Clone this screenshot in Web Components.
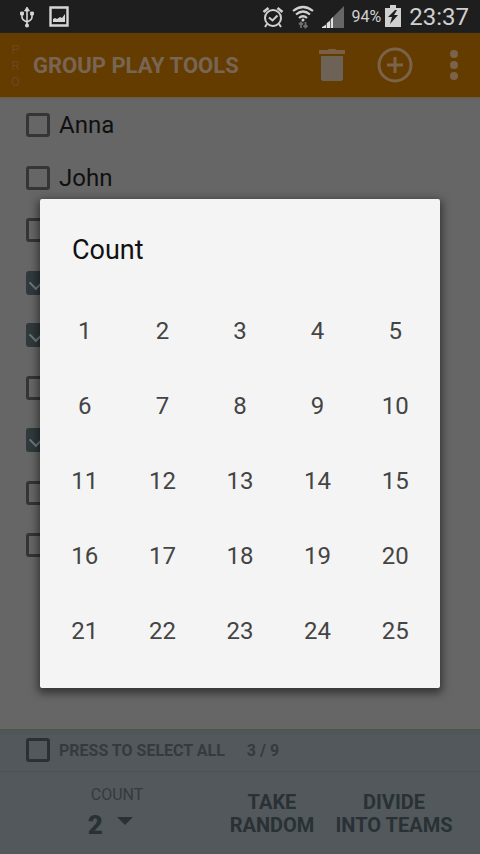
<!DOCTYPE html>
<html lang="en">
<head>
<meta charset="utf-8">
<meta name="viewport" content="width=device-width, initial-scale=1">
<title>Group Play Tools</title>
<style>
html, body { margin: 0; height: 100%; }
body { font-family: Roboto, "Liberation Sans", sans-serif; background: #666; }
</style>
</head>
<body>
<play-app></play-app>
<script>
const define = (name, html, setup) => customElements.define(name, class extends HTMLElement {
  constructor() {
    super();
    this.attachShadow({ mode: "open" });
  }
  connectedCallback() {
    this.shadowRoot.innerHTML = `<style>*{box-sizing:border-box}button{font:inherit;color:inherit;background:none;border:0;padding:0;margin:0;cursor:pointer}svg{display:block}</style>` + html;
    if (setup) setup.call(this, this.shadowRoot);
  }
});

define("status-bar", `
<style>
:host { display: flex; align-items: center; height: 33px; padding: 0 11px 0 17px; background: #1e1e1e; color: #d0d0d0; font-size: 16px; }
.left { display: flex; gap: 12px; flex: 1; align-items: center; }
.right { display: flex; gap: 8px; align-items: center; }
.power { display: flex; gap: 4px; align-items: center; }
time { font-size: 24px; line-height: 32px; }
</style>
<div class="left">
  <svg width="20" height="24" viewBox="0 0 20 24" fill="none" stroke="#d6d6d6" stroke-width="1.6"><path d="M10 4v17M5 9v3q0 3 5 5q5-2 5-5V9"/><path d="M10 2l2.500 4h-5zM3.500 7h3v3h-3zM13.500 7h3v3h-3z" fill="#d6d6d6" stroke-width=".8"/><circle cx="10" cy="20.500" r="2" fill="#d6d6d6" stroke="none"/></svg>
  <svg width="20" height="22" viewBox="0 0 20 22"><path d="M1.500 1.500h17v18h-17z" fill="none" stroke="#d6d6d6" stroke-width="2.400"/><path d="M4 16v-3l2-1 2 1 3-2 2 1 3-4v8z" fill="#d6d6d6"/></svg>
</div>
<div class="right">
  <svg width="22" height="22" viewBox="0 0 22 22" fill="none" stroke="#d0d0d0" stroke-width="2"><circle cx="11" cy="12" r="8"/><path d="M7 11.500l3.500 3 5-5"/><path d="M1.500 6l5-4M20.500 6l-5-4" stroke-width="2.600"/><path d="M5 18l-2 3M17 18l2 3"/></svg>
  <svg width="22" height="24" viewBox="0 0 22 24" fill="none" stroke="#d0d0d0" stroke-width="2.200"><path d="M1 6q10-8 20 0M4 9.500q7-6 14 0M7 13q4-3.500 8 0"/><circle cx="11" cy="15" r="1.500" fill="#d0d0d0" stroke="none"/><path d="M9 23v-5M7 19.500l2-2 2 2M13.500 17v5M11.500 20.500l2 2 2-2" stroke="#6e6e6e" stroke-width="1.800"/></svg>
  <svg width="22" height="22" viewBox="0 0 22 22"><path d="M0 22L22 0v22z" fill="#666"/><path d="M0 22v-1l4-2v3zM5 22v-5l3-2v7zM9 22v-9l2-2v11z" fill="#e0e0e0"/></svg>
  <div class="power"><span>94%</span>
  <svg width="16" height="23" viewBox="0 0 16 23"><path d="M5 0h6v3h5v19H0V3h5z" fill="#d0d0d0"/><path d="M10 5l-7 7h4l-2 7 8-9H9l3-5z" fill="#1e1e1e"/></svg></div>
  <time>23:37</time>
</div>`);

define("app-bar", `
<style>
:host { display: flex; align-items: center; height: 64px; padding: 0 16px 0 9px; background: #643c00; box-shadow: 0 1px 2px #6f5740; position: relative; color: #786553; }
.pro { display: flex; flex-direction: column; width: 13px; align-items: center; font-size: 13px; line-height: 16px; color: #6c4720; margin-right: 11px; padding-top: 2px; }
h1 { flex: 1; margin: 0; padding-top: 2px; font-size: 22px; line-height: 32px; font-weight: 700; white-space: nowrap; }
nav { display: flex; align-items: center; gap: 32px; }
nav button:last-child { margin-left: -1px; }
</style>
<div class="pro"><span>P</span><span>R</span><span>O</span></div>
<h1>GROUP PLAY TOOLS</h1>
<nav>
  <button aria-label="Delete"><svg width="26" height="34" viewBox="0 0 26 34"><path d="M0 2h8l2-1h6l2 1h8v4H0z" fill="#7b5f45"/><path d="M2 8h22v23q0 2-2 2H4q-2 0-2-2z" fill="#6c6256"/></svg></button>
  <button aria-label="Add"><svg width="36" height="36" viewBox="0 0 36 36" fill="none" stroke="#7b634a" stroke-width="3"><circle cx="18" cy="18" r="16"/><path d="M18 10v16M10 18h16"/></svg></button>
  <button aria-label="More"><svg width="20" height="32" viewBox="0 0 20 32" fill="#7b634a"><circle cx="10" cy="5" r="4"/><circle cx="10" cy="16" r="4"/><circle cx="10" cy="27" r="4"/></svg></button>
</nav>`);

define("check-row", `
<style>
:host { display: flex; align-items: center; padding-left: 26px; color: #101010; font-size: 24px; }
label { display: flex; align-items: center; gap: 9px; }
input { appearance: none; margin: 0; width: 24px; height: 24px; border: 3px solid var(--line, #353535); border-radius: 3px; display: grid; place-items: center; }
input:checked { background: #30393c; border-color: #30393c; }
input:checked::after { content: ""; width: 14px; height: 8px; border: solid #6f787b; border-width: 0 0 2px 2px; transform: translateY(-2px) rotate(-45deg); }
</style>
<label><input type="checkbox"><slot></slot></label>`, function (root) {
  const box = root.querySelector("input");
  box.checked = this.hasAttribute("checked");
  if (!this.textContent.trim()) box.setAttribute("aria-label", "Player");
});

define("player-list", `
<style>
:host { display: grid; grid-template-rows: repeat(12, 1fr); flex: 1; padding-top: 2px; background: #666; }
</style>
<check-row>Anna</check-row><check-row>John</check-row><check-row></check-row>
<check-row checked></check-row><check-row checked></check-row><check-row></check-row>
<check-row checked></check-row><check-row></check-row><check-row></check-row>`);

define("bottom-bar", `
<style>
:host { display: block; background: #52585b; color: #293135; font-weight: 700; box-shadow: inset 0 5px 3px -2px #50554f; --line: #293135; }
.all { display: flex; align-items: center; height: 43px; gap: 22px; border-bottom: 1px solid #4c5255; }
.all check-row, .all span { font-size: 16px; color: #343b3f; }
.acts { display: grid; grid-template-columns: 220fr 104fr 140fr 16fr; height: 82px; padding-top: 2px; font-size: 20px; line-height: 23px; align-items: center; }
.count { display: grid; justify-content: center; justify-items: start; padding-left: 11px; }
.count small { padding-left: 3px; font-size: 16px; line-height: 22px; font-weight: 400; color: #343b3f; }
.count b { display: flex; gap: 14px; align-items: center; font-size: 26px; line-height: 38px; }
.count svg { margin-bottom: 8px; }
</style>
<div class="all"><check-row>PRESS TO SELECT ALL</check-row><span>3 / 9</span></div>
<div class="acts">
  <button class="count"><small>COUNT</small><b>2 <svg width="16" height="8" viewBox="0 0 16 8"><path d="M0 0h16L8 8z" fill="#293135"/></svg></b></button>
  <button>TAKE<br>RANDOM</button>
  <button>DIVIDE<br>INTO TEAMS</button>
</div>`);

define("count-dialog", `
<style>
:host { position: absolute; inset: 33px 0 0; display: flex; align-items: center; padding: 0 40px; }
section { flex: 1; background: #f4f4f4; border-radius: 2px; box-shadow: 0 3px 8px 2px rgba(0,0,0,.5); padding: 0 6px 20px; }
h2 { margin: 0; padding: 35px 26px 27px; font-size: 27px; line-height: 32px; font-weight: 400; color: #111; }
.grid { display: grid; grid-template-columns: repeat(5, 1fr); grid-auto-rows: 75px; font-size: 24px; color: #444; }
</style>
<section role="dialog" aria-labelledby="t"><h2 id="t">Count</h2><div class="grid"></div></section>`, function (root) {
  root.querySelector(".grid").innerHTML = Array.from({ length: 25 }, (_, i) => `<button>${i + 1}</button>`).join("");
});

define("play-app", `
<style>:host { display: flex; flex-direction: column; min-height: 100vh; position: relative; }</style>
<status-bar></status-bar><app-bar></app-bar><player-list></player-list><bottom-bar></bottom-bar><count-dialog></count-dialog>`);
</script>
</body>
</html>
